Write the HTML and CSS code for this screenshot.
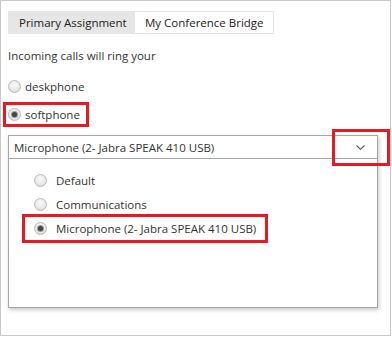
FILE: index.html
```html
<!DOCTYPE html>
<html>
<head>
<meta charset="utf-8">
<link rel="stylesheet" href="styles.css">
</head>
<body>
<div class="frame">
  <div class="tabs">
    <div class="tab tab-active">Primary Assignment</div>
    <div class="tab tab-other">My Conference Bridge</div>
  </div>
  <div class="prompt">Incoming calls will ring your</div>
  <div class="radio-row first"><span class="radio"></span><span>deskphone</span></div>
  <div class="radio-row hl-soft"><span class="radio checked"></span><span>softphone</span></div>
  <div class="select">
    <div class="select-head">
      <span>Microphone (2- Jabra SPEAK 410 USB)</span>
      <svg class="chev" width="9" height="5" viewBox="0 0 9 5"><path d="M0.5 0.5 L4.5 4.3 L8.5 0.5" fill="none" stroke="#555" stroke-width="1.1"/></svg>
      <span class="hl-chev"></span>
    </div>
    <div class="options">
      <div class="option"><span class="radio"></span><span>Default</span></div>
      <div class="option"><span class="radio"></span><span>Communications</span></div>
      <div class="option hl-mic"><span class="radio checked"></span><span>Microphone (2- Jabra SPEAK 410 USB)</span></div>
    </div>
  </div>
</div>
</body>
</html>
```
FILE: styles.css
```css
html, body { margin: 0; padding: 0; background: #fff; }
.frame {
  width: 391px; height: 336px; box-sizing: border-box;
  border: 1px solid #c8c8c8;
  padding: 10px 0 0 7px;
  font-family: "Open Sans", "Noto Sans", sans-serif;
  font-size: 11.5px; color: #333;
}
.tabs { display: flex; height: 23px; }
.tab { display: flex; align-items: center; box-sizing: border-box; color: #222; }
.tab-active { background: #e6e6e6; width: 127px; padding-left: 11px; }
.tab-other { border: 1px solid #e4e4e4; border-left: none; width: 139px; padding-left: 10px; }
.prompt { margin-top: 14px; line-height: 16px; }
.radio-row { display: flex; align-items: center; gap: 4px; height: 28px; position: relative; }
.radio-row.first { margin-top: 8px; }
.radio {
  width: 13px; height: 13px; box-sizing: border-box; border-radius: 50%;
  border: 1px solid #b9b9b9;
  background: radial-gradient(circle at 50% 35%, #fafafa 0%, #e8e8e8 55%, #d6d6d6 100%);
  display: flex; align-items: center; justify-content: center; flex: none;
}
.radio.checked::after {
  content: ""; width: 5px; height: 5px; border-radius: 50%;
  background: #444; box-shadow: 0 0 0 1px #999;
}
.hl-soft::after {
  content: ""; position: absolute; left: -5px; top: 2px; width: 86px; height: 25px;
  box-sizing: border-box; border: 3px solid #e51a25;
}
.select {
  margin-top: 7px; width: 370px; height: 173px; box-sizing: border-box;
  border: 1px solid #a6a6a6; box-shadow: 1px 2px 4px rgba(0,0,0,0.22);
}
.select-head {
  height: 23px; box-sizing: border-box; border-bottom: 1px solid #a6a6a6;
  display: flex; align-items: center; justify-content: space-between;
  padding: 0 12px 0 5px; position: relative;
}
.chev { display: block; }
.hl-chev {
  position: absolute; left: 323px; top: -7px; width: 58px; height: 37px;
  box-sizing: border-box; border: 3px solid #e51a25;
}
.options { padding-top: 9px; }
.option { display: flex; align-items: center; gap: 9px; height: 24px; padding-left: 25px; position: relative; }
.hl-mic::after {
  content: ""; position: absolute; left: 13px; top: -2px; width: 246px; height: 29px;
  box-sizing: border-box; border: 3px solid #e51a25;
}
```
